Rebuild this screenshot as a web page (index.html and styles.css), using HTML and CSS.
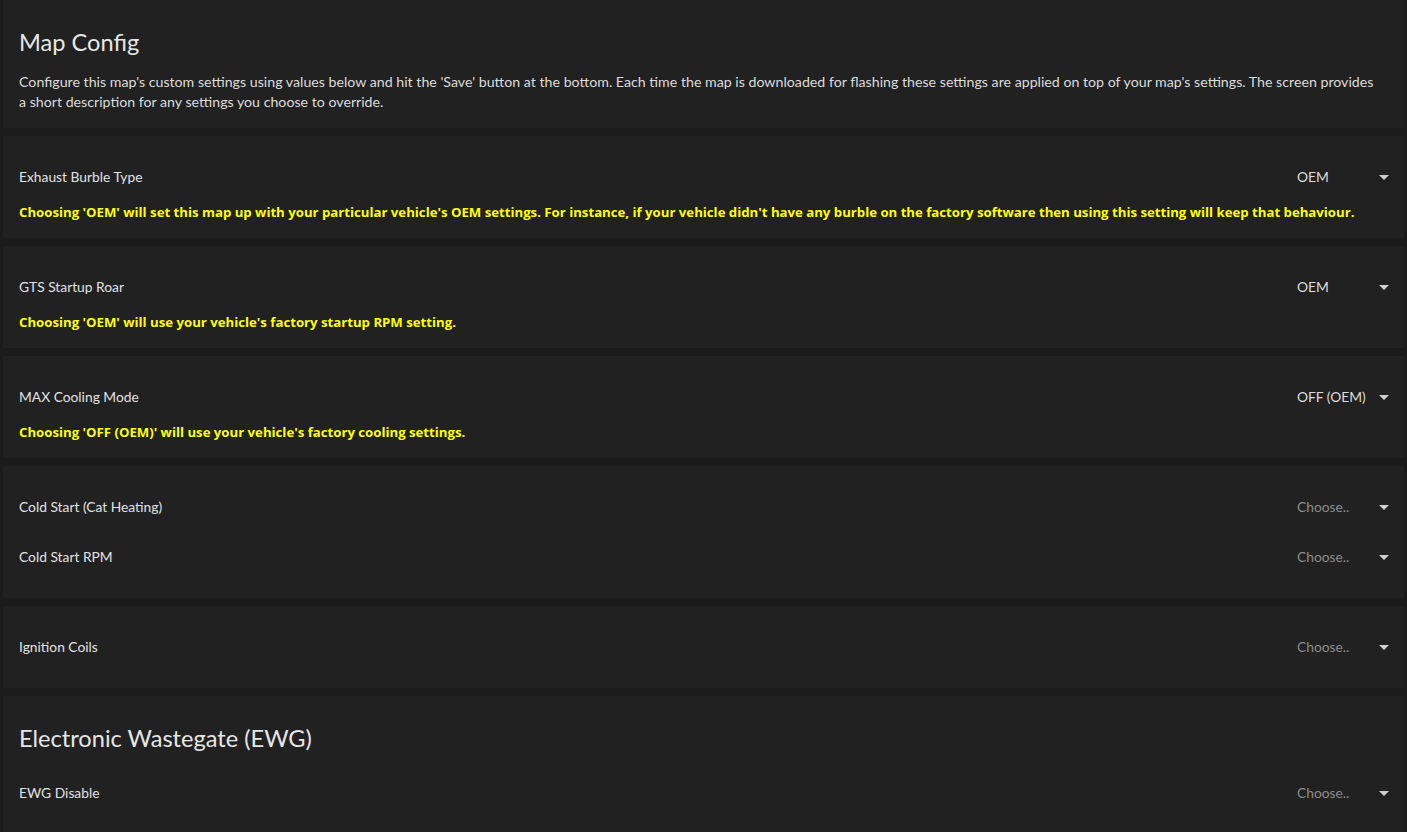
FILE: index.html
```html
<!DOCTYPE html>
<html>
<head>
<meta charset="utf-8">
<link rel="stylesheet" href="styles.css">
</head>
<body>
<div class="page">
  <section class="card">
    <h1 class="title">Map Config</h1>
    <p class="desc">Configure this map's custom settings using values below and hit the 'Save' button at the bottom. Each time the map is downloaded for flashing these settings are applied on top of your map's settings. The screen provides a&nbsp;short description for any settings you choose to override.</p>
  </section>

  <section class="card">
    <div class="row">
      <span class="label">Exhaust Burble Type</span>
      <div class="select"><span class="value">OEM</span><svg class="arrow" width="10" height="5" viewBox="0 0 10 5"><path d="M0 0H10L5 5Z"/></svg></div>
    </div>
    <p class="note">Choosing 'OEM' will set this map up with your particular vehicle's OEM settings. For instance, if your vehicle didn't have any burble on the factory software then using this setting will keep that behaviour.</p>
  </section>

  <section class="card">
    <div class="row">
      <span class="label">GTS Startup Roar</span>
      <div class="select"><span class="value">OEM</span><svg class="arrow" width="10" height="5" viewBox="0 0 10 5"><path d="M0 0H10L5 5Z"/></svg></div>
    </div>
    <p class="note">Choosing 'OEM' will use your vehicle's factory startup RPM setting.</p>
  </section>

  <section class="card">
    <div class="row">
      <span class="label">MAX Cooling Mode</span>
      <div class="select"><span class="value">OFF (OEM)</span><svg class="arrow" width="10" height="5" viewBox="0 0 10 5"><path d="M0 0H10L5 5Z"/></svg></div>
    </div>
    <p class="note">Choosing 'OFF (OEM)' will use your vehicle's factory cooling settings.</p>
  </section>

  <section class="card">
    <div class="row">
      <span class="label">Cold Start (Cat Heating)</span>
      <div class="select"><span class="value placeholder">Choose..</span><svg class="arrow" width="10" height="5" viewBox="0 0 10 5"><path d="M0 0H10L5 5Z"/></svg></div>
    </div>
    <div class="row">
      <span class="label">Cold Start RPM</span>
      <div class="select"><span class="value placeholder">Choose..</span><svg class="arrow" width="10" height="5" viewBox="0 0 10 5"><path d="M0 0H10L5 5Z"/></svg></div>
    </div>
  </section>

  <section class="card">
    <div class="row">
      <span class="label">Ignition Coils</span>
      <div class="select"><span class="value placeholder">Choose..</span><svg class="arrow" width="10" height="5" viewBox="0 0 10 5"><path d="M0 0H10L5 5Z"/></svg></div>
    </div>
  </section>

  <section class="card">
    <h2 class="title">Electronic Wastegate (EWG)</h2>
    <div class="row">
      <span class="label">EWG Disable</span>
      <div class="select"><span class="value placeholder">Choose..</span><svg class="arrow" width="10" height="5" viewBox="0 0 10 5"><path d="M0 0H10L5 5Z"/></svg></div>
    </div>
  </section>
</div>
</body>
</html>
```

FILE: styles.css
```css
html, body {
  margin: 0;
  padding: 0;
  background: #1b1b1b;
  height: 100%;
  overflow: hidden;
}

body {
  font-family: "Lato", "Liberation Sans", sans-serif;
  font-size: 13.8px;
  line-height: 20px;
  color: #e2e2e2;
}

.page {
  padding: 0 3px;
}

.card {
  background: #212121;
  border-radius: 2px;
  padding: 16px;
  margin-bottom: 8px;
}

.title {
  margin: 12px 0 16px;
  font-size: 23.6px;
  line-height: 28px;
  font-weight: 400;
  color: #e6e6e6;
}

.desc {
  margin: 0;
  font-size: 14.2px;
  color: #dcdcdc;
}

.row {
  height: 50px;
  display: flex;
  align-items: center;
  justify-content: space-between;
}

.label {
  color: #e2e2e2;
}

.select {
  width: 92px;
  margin-right: -1px;
  display: flex;
  align-items: center;
}

.value {
  flex: 1;
  color: #dedede;
}

.value.placeholder {
  color: #8c8c8c;
}

.arrow {
  fill: #cfcfcf;
  display: block;
}

.note {
  margin: 0;
  font-family: "Open Sans", "Lato", sans-serif;
  font-size: 13.2px;
  color: #ffff00;
  font-weight: 700;
}
```
